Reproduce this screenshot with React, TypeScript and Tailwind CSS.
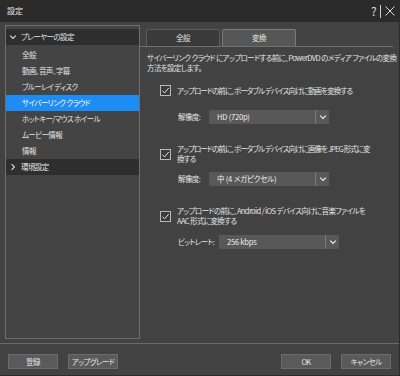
import { useState } from "react";

const items = [
  "全般",
  "動画、音声、字幕",
  "ブルーレイ ディスク",
  "サイバーリンク クラウド",
  "ホットキー/マウス ホイール",
  "ムービー情報",
  "情報",
];

const Chevron = ({ dir = "down", className = "" }: { dir?: "down" | "right"; className?: string }) => (
  <svg viewBox="0 0 10 10" className={className} fill="none" stroke="currentColor" strokeWidth="1.4">
    {dir === "down" ? <path d="M1.5 3.2 5 6.8 8.5 3.2" /> : <path d="M3.2 1.5 6.8 5 3.2 8.5" />}
  </svg>
);

const CheckBox = () => (
  <div className="w-[11px] h-[11px] shrink-0 border border-[#b8b8b8] bg-[#3b3b3b] flex items-center justify-center">
    <svg viewBox="0 0 10 10" className="w-[9px] h-[9px]" fill="none" stroke="#e8e8e8" strokeWidth="1.1">
      <path d="M1.6 5.2 4 7.6 8.6 2.2" />
    </svg>
  </div>
);

const Select = ({ value }: { value: string }) => (
  <div className="w-[120px] h-[14px] shrink-0 bg-[#585858] flex items-center text-[#f0f0f0]">
    <span className="flex-1 pl-[8px] tracking-[-0.2px]">{value}</span>
    <div className="w-[14px] h-full border-l border-[#7a7a7a] flex items-center justify-center">
      <Chevron className="w-[8px] h-[8px]" />
    </div>
  </div>
);

const Button = ({ label }: { label: string }) => (
  <button className="w-[50px] h-[15px] bg-[#5a5a5a] border border-[#6c6c6c] text-[#e4e4e4] flex items-center justify-center leading-none whitespace-nowrap">
    {label}
  </button>
);

export default function App() {
  const [selected] = useState(3);

  return (
    <div className="w-[400px] h-[376px] bg-[#424242] flex flex-col text-[7.5px] tracking-[-0.6px] text-[#e4e4e4] font-['Noto_Sans_CJK_JP','Noto_Sans',sans-serif] [font-feature-settings:'palt'] border-r border-b border-[#2c2c2c]">
      {/* Title bar */}
      <div className="h-[22px] shrink-0 bg-[#2b2b2b] flex items-center justify-between pl-[7px] pr-[4px] text-[#e6e6e6]">
        <span className="text-[8px] tracking-[0px]">設定</span>
        <div className="flex items-center gap-[4px] text-[#dcdcdc]">
          <span className="text-[12px] leading-none">?</span>
          <span className="w-px h-[13px] bg-[#cfcfcf]" />
          <svg viewBox="0 0 10 10" className="w-[10px] h-[10px]" stroke="currentColor" strokeWidth="1">
            <path d="M0.5 0.5 9.5 9.5M9.5 0.5 0.5 9.5" />
          </svg>
        </div>
      </div>

      {/* Main */}
      <div className="h-[321px] shrink-0 flex pt-[3px] pl-[5px] pr-[6px] whitespace-nowrap">
        {/* Tree */}
        <div className="w-[135px] h-[314px] shrink-0 border border-[#6e6e6e] bg-[#444444] pt-[3px]">
          <div className="h-[16px] bg-[#2e2e2e] flex items-center pl-[3px] gap-[4px]">
            <Chevron className="w-[8px] h-[8px] text-[#dcdcdc]" />
            <span>プレーヤーの設定</span>
          </div>
          <div className="mt-[2px]">
            {items.map((it, i) => (
              <div
                key={it}
                className={`h-[16px] flex items-center pl-[16px] ${i === selected ? "bg-[#1e8cf5] text-white" : ""}`}
              >
                {it}
              </div>
            ))}
          </div>
          <div className="h-[16px] bg-[#2e2e2e] flex items-center pl-[3px] gap-[4px]">
            <Chevron dir="right" className="w-[8px] h-[8px] text-[#dcdcdc]" />
            <span>環境設定</span>
          </div>
        </div>

        {/* Right side */}
        <div className="flex-1 min-w-0 flex flex-col">
          <div className="h-[22px] flex items-end pl-[6px] gap-[2px] border-b border-[#707070]">
            <div className="w-[74px] h-[17px] bg-[#3a3a3a] border border-b-0 border-[#5c5c5c] rounded-t-[2px] flex items-center justify-center">
              全般
            </div>
            <div className="w-[74px] h-[17px] bg-[#565656] border border-b-0 border-[#7a7a7a] rounded-t-[2px] flex items-center justify-center">
              変換
            </div>
          </div>

          <div className="flex-1 pl-[7px] pt-[6px] leading-[10px]">
            <p>
              サイバーリンク クラウド にアップロードする前に、PowerDVD のメディア ファイルの変換
              <br />
              方法を設定します。
            </p>

            <div className="mt-[12px] pl-[13px] flex items-center gap-[6px]">
              <CheckBox />
              <span className="tracking-[-0.9px]">アップロードの前に、ポータブル デバイス向けに動画を変換する</span>
            </div>
            <div className="mt-[14px] pl-[31px] flex items-center">
              <span className="w-[31px]">解像度:</span>
              <Select value="HD (720p)" />
            </div>

            <div className="mt-[20px] pl-[13px] flex items-center gap-[6px]">
              <CheckBox />
              <span className="tracking-[-0.9px]">
                アップロードの前に、ポータブル デバイス向けに画像を JPEG 形式に変
                <br />
                換する
              </span>
            </div>
            <div className="mt-[8px] pl-[31px] flex items-center">
              <span className="w-[31px]">解像度:</span>
              <Select value="中 (4 メガピクセル)" />
            </div>

            <div className="mt-[20px] pl-[13px] flex items-center gap-[6px]">
              <CheckBox />
              <span>
                アップロードの前に、Android / iOS デバイス向けに音楽ファイルを
                <br />
                AAC 形式に変換する
              </span>
            </div>
            <div className="mt-[9px] pl-[31px] flex items-center">
              <span className="w-[41px]">ビットレート:</span>
              <Select value="256 kbps" />
            </div>
          </div>
        </div>
      </div>

      {/* Footer */}
      <div className="flex-1 border-t border-[#6a6a6a] flex items-start justify-between pt-[10px] px-[8px]">
        <div className="flex gap-[10px]">
          <Button label="登録" />
          <Button label="アップグレード" />
        </div>
        <div className="flex gap-[10px]">
          <Button label="OK" />
          <Button label="キャンセル" />
        </div>
      </div>
    </div>
  );
}
